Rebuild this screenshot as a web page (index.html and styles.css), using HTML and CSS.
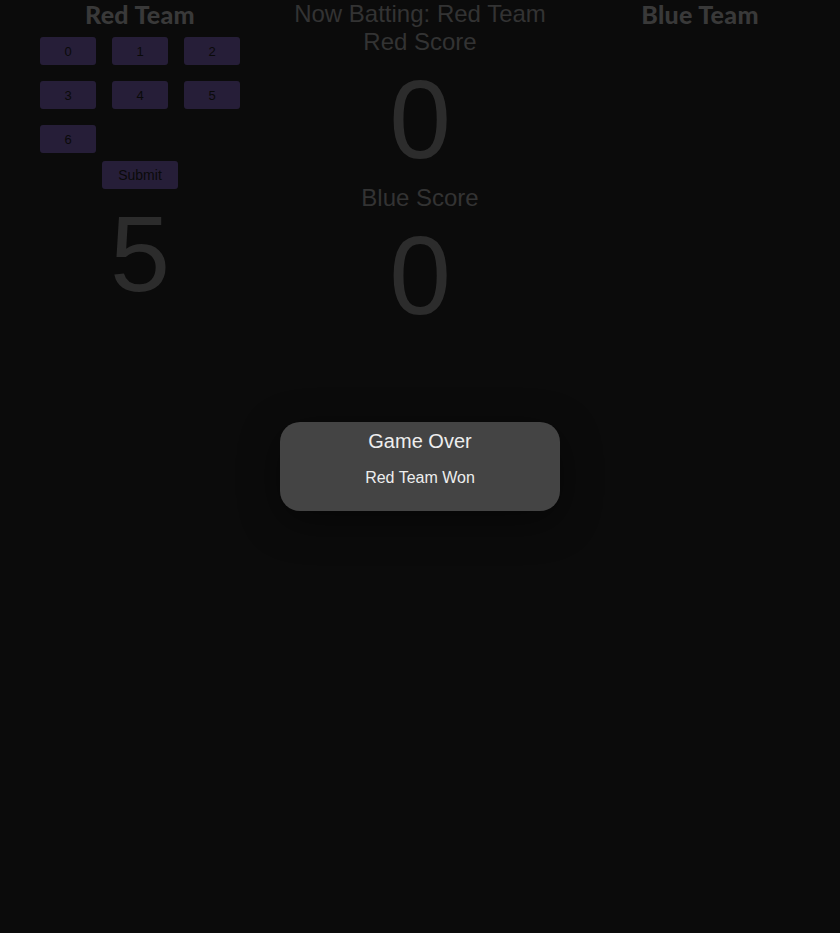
FILE: index.html
```html
<!DOCTYPE html>
<html>
<head>
<meta charset="utf-8">
<link rel="stylesheet" href="styles.css">
</head>
<body>
<div class="game">
  <section class="col">
    <h1 class="team">Red Team</h1>
    <div class="pad">
      <button class="num">0</button>
      <button class="num">1</button>
      <button class="num">2</button>
      <button class="num">3</button>
      <button class="num">4</button>
      <button class="num">5</button>
      <button class="num">6</button>
    </div>
    <button class="submit">Submit</button>
    <div class="pick">5</div>
  </section>
  <section class="col mid">
    <div class="batting">Now Batting: Red Team</div>
    <div class="label">Red Score</div>
    <div class="score">0</div>
    <div class="label">Blue Score</div>
    <div class="score">0</div>
  </section>
  <section class="col">
    <h1 class="team">Blue Team</h1>
  </section>
</div>
<div class="modal">
  <div class="modal-title">Game Over</div>
  <div class="modal-text">Red Team Won</div>
</div>
</body>
</html>
```
FILE: styles.css
```css
html, body {
  margin: 0;
  padding: 0;
  background: #0b0b0b;
  height: 100%;
}
body {
  font-family: "Liberation Sans", Arial, sans-serif;
  position: relative;
}
.game {
  display: grid;
  grid-template-columns: 280px 280px 280px;
}
.col {
  display: flex;
  flex-direction: column;
  align-items: center;
}
.team {
  margin: 0;
  font-family: Lato, "Noto Sans", sans-serif;
  font-weight: 900;
  font-size: 25px;
  line-height: 28px;
  color: #393939;
  letter-spacing: 0.3px;
}
.pad {
  margin-top: 9px;
  display: grid;
  grid-template-columns: repeat(3, 56px);
  gap: 16px;
}
.num, .submit {
  font-family: "Liberation Sans", Arial, sans-serif;
  font-size: 13px;
  height: 28px;
  border: none;
  border-radius: 3px;
  background: #261e38;
  color: #0a0a0a;
  padding: 0;
}
.num { width: 56px; }
.submit {
  margin-top: 8px;
  width: 76px;
  font-size: 14px;
}
.pick {
  font-size: 108px;
  line-height: 110px;
  margin-top: 10px;
  color: #2c2c2c;
}
.batting, .label {
  font-size: 24px;
  line-height: 28px;
  color: #333;
}
.score {
  font-size: 111px;
  line-height: 128px;
  color: #2c2c2c;
}
.modal {
  position: absolute;
  left: 280px;
  top: 422px;
  width: 280px;
  height: 89px;
  box-sizing: border-box;
  background: #444444;
  border-radius: 20px;
  box-shadow: 0 10px 40px rgba(0,0,0,0.45);
  text-align: center;
  color: #eeeeee;
  padding-top: 8px;
}
.modal-title {
  font-size: 20px;
  line-height: 22px;
}
.modal-text {
  margin-top: 17px;
  font-size: 16px;
  line-height: 18px;
}
```
